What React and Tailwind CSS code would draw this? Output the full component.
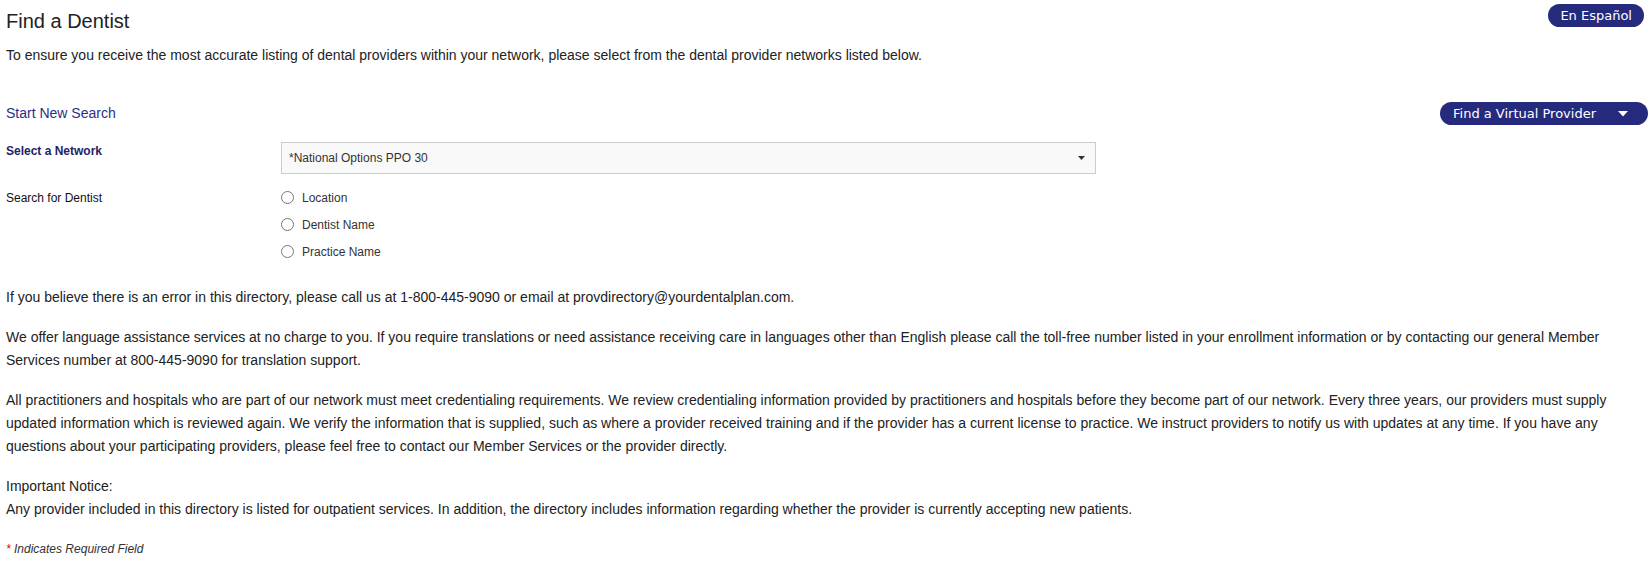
import React from "react";

function Radio({ label }) {
  return (
    <div className="flex items-center h-[27px]">
      <span className="block w-[13px] h-[13px] rounded-full border border-[#767676] bg-white mt-[-1px]"></span>
      <span className="ml-[8px] text-[12px] text-[#333]">{label}</span>
    </div>
  );
}

export default function App() {
  return (
    <div className="min-h-screen bg-white px-[6px] pt-[4px] font-['Liberation_Sans',Arial,sans-serif] text-[#222]">
      <div className="flex justify-between items-start">
        <h1 className="mt-[6px] text-[20px] leading-[22px] text-[#222]">Find a Dentist</h1>
        <button className="h-[23px] px-[12px] mr-[-1px] rounded-full bg-[#252a7d] text-white text-[13px] leading-[23px] font-['DejaVu_Sans',Verdana,sans-serif]">
          En Español
        </button>
      </div>
      <p className="mt-[12px] text-[14px] leading-[23px]">
        To ensure you receive the most accurate listing of dental providers within your network, please select from the dental provider networks listed below.
      </p>

      <div className="mt-[35px] flex justify-between items-center h-[23px]">
        <span className="text-[14px] leading-[23px] text-[#2a2f86]">Start New Search</span>
        <button className="h-[23px] w-[208px] mr-[-5px] pl-[13px] pr-[20px] rounded-full bg-[#252a7d] text-white text-[13px] leading-[23px] font-['DejaVu_Sans',Verdana,sans-serif] flex items-center justify-between">
          <span>Find a Virtual Provider</span>
          <svg width="10" height="6" viewBox="0 0 10 6" className="block">
            <path d="M0 0 L10 0 L5 5.5 Z" fill="white" />
          </svg>
        </button>
      </div>

      <div className="mt-[17px] grid grid-cols-[275px_815px]">
        <div className="pt-[1px] text-[12px] leading-[16px] font-bold text-[#1e2366]">Select a Network</div>
        <div className="h-[32px] border border-[#ccc] bg-[#f9f9f9] pl-[7px] pr-[10px] flex items-center justify-between">
          <span className="text-[12px] text-[#333]">*National Options PPO 30</span>
          <svg width="7" height="4" viewBox="0 0 7 4" className="block">
            <path d="M0 0 L7 0 L3.5 4 Z" fill="#333" />
          </svg>
        </div>
      </div>

      <div className="mt-[11px] grid grid-cols-[275px_815px]">
        <div className="text-[12px] leading-[27px] text-[#111]">Search for Dentist</div>
        <div className="flex flex-col mt-[-1px]">
          <Radio label="Location" />
          <Radio label="Dentist Name" />
          <Radio label="Practice Name" />
        </div>
      </div>

      <p className="mt-[21px] text-[14px] leading-[23px]">
        If you believe there is an error in this directory, please call us at 1-800-445-9090 or email at provdirectory@yourdentalplan.com.
      </p>
      <p className="mt-[17px] text-[14px] leading-[23px]">
        We offer language assistance services at no charge to you. If you require translations or need assistance receiving care in languages other than English please call the toll-free number listed in your enrollment information or by contacting our general Member Services number at 800-445-9090 for translation support.
      </p>
      <p className="mt-[17px] text-[14px] leading-[23px]">
        All practitioners and hospitals who are part of our network must meet credentialing requirements. We review credentialing information provided by practitioners and hospitals before they become part of our network. Every three years, our providers must supply updated information which is reviewed again. We verify the information that is supplied, such as where a provider received training and if the provider has a current license to practice. We instruct providers to notify us with updates at any time. If you have any questions about your participating providers, please feel free to contact our Member Services or the provider directly.
      </p>
      <p className="mt-[17px] text-[14px] leading-[23px]">
        Important Notice:
        <br />
        Any provider included in this directory is listed for outpatient services. In addition, the directory includes information regarding whether the provider is currently accepting new patients.
      </p>
      <p className="mt-[20px] text-[12px] leading-[16px] italic text-[#333]">
        <span className="text-[#d00]">*</span> Indicates Required Field
      </p>
    </div>
  );
}
